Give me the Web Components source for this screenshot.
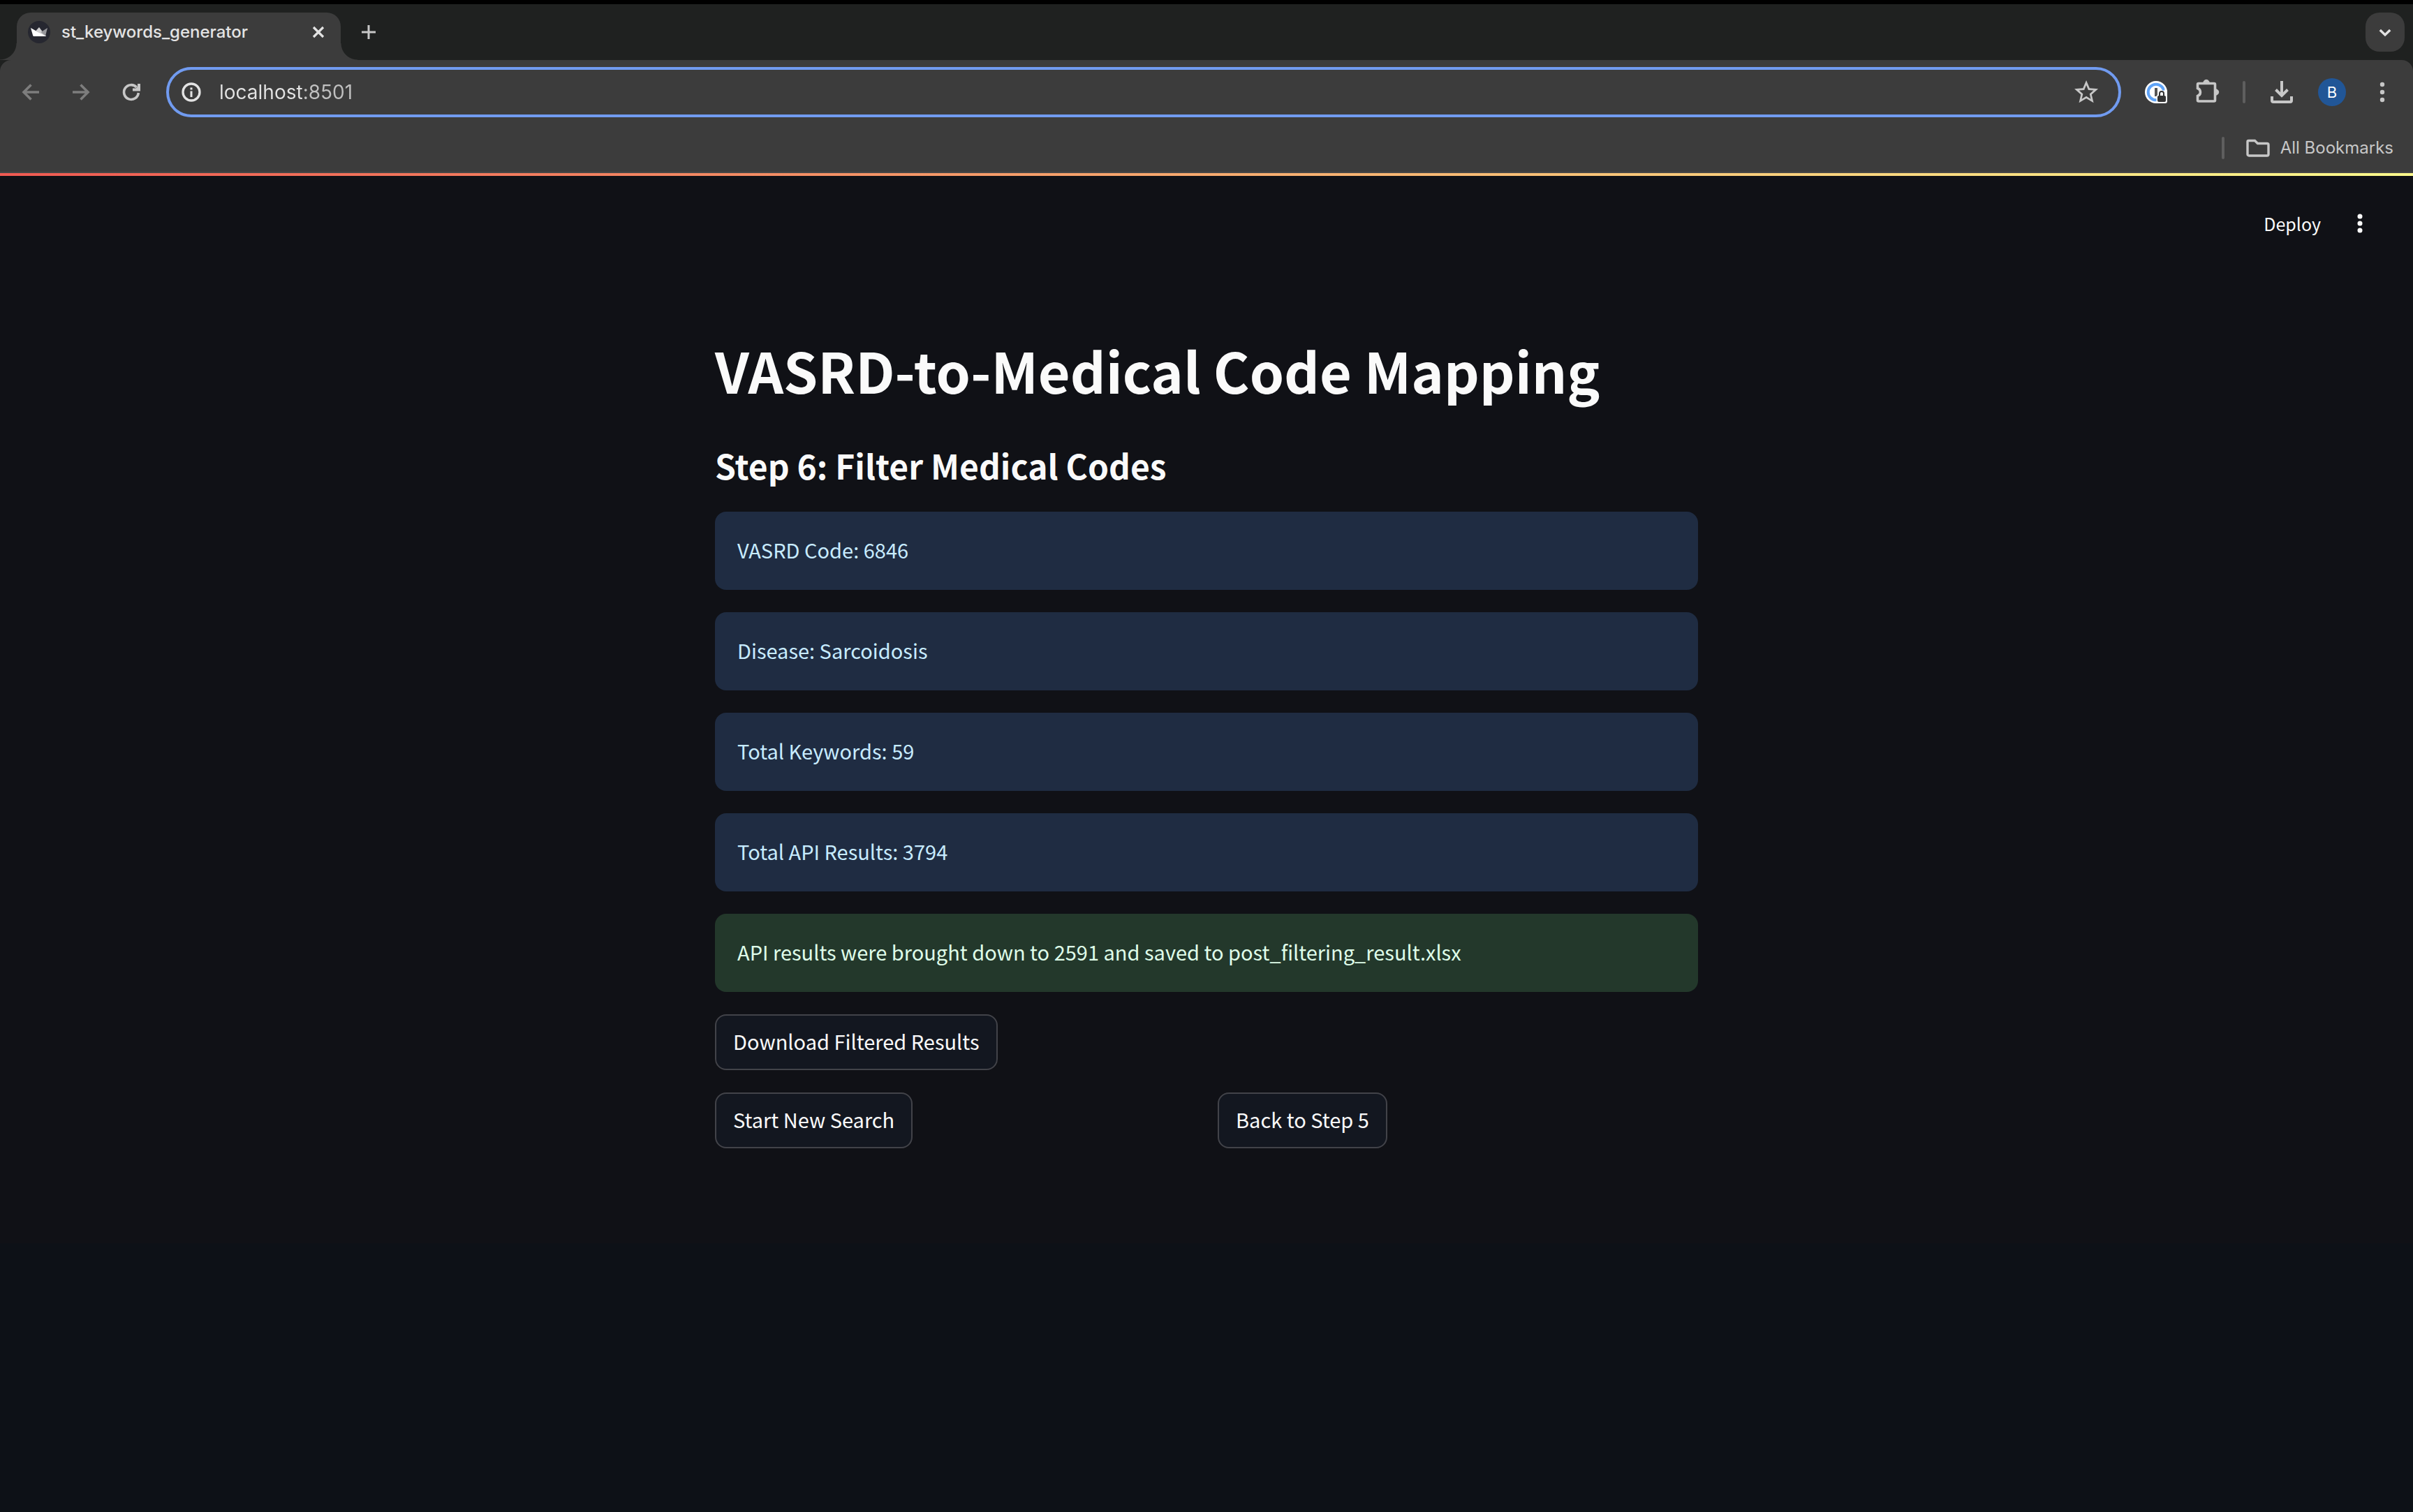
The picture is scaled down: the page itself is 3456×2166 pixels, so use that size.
<!DOCTYPE html>
<html lang="en">
<head>
<meta charset="utf-8">
<title>st_keywords_generator</title>
<style>
  html, body { margin: 0; min-height: 100%; background: #0d1117; }
  body { font-family: Inter, "Liberation Sans", sans-serif; }
</style>
</head>
<body>
<browser-frame>
  <tab-strip slot="tabs"></tab-strip>
  <tool-bar slot="toolbar" address="localhost:8501"></tool-bar>
  <bookmarks-bar slot="bookmarks">All Bookmarks</bookmarks-bar>
  <app-view>
    <app-header slot="header">Deploy</app-header>
    <page-heading level="1">VASRD-to-Medical Code Mapping</page-heading>
    <page-heading level="2">Step 6: Filter Medical Codes</page-heading>
    <app-stack>
      <status-alert kind="info">VASRD Code: 6846</status-alert>
      <status-alert kind="info">Disease: Sarcoidosis</status-alert>
      <status-alert kind="info">Total Keywords: 59</status-alert>
      <status-alert kind="info">Total API Results: 3794</status-alert>
      <status-alert kind="success">API results were brought down to 2591 and saved to post_filtering_result.xlsx</status-alert>
      <action-button>Download Filtered Results</action-button>
      <button-columns>
        <action-button>Start New Search</action-button>
        <action-button>Back to Step 5</action-button>
      </button-columns>
    </app-stack>
  </app-view>
</browser-frame>

<script>
const ICONS = {
  back: '<path d="M32 20H11M20.500 9.500 10 20l10.500 10.500" fill="none" stroke="currentColor" stroke-width="3.600"/>',
  forward: '<path d="M8 20h21M19.500 9.500 30 20 19.500 30.500" fill="none" stroke="currentColor" stroke-width="3.600"/>',
  reload: '<path d="M30.300 21A10.400 10.400 0 1 1 27.600 13" fill="none" stroke="currentColor" stroke-width="3.600"/><path d="M29 8h4v10.500H22v-4h4.500L29 12z" fill="currentColor"/>',
  info: '<circle cx="20" cy="20" r="12" fill="none" stroke="currentColor" stroke-width="3.300"/><path d="M18.500 18.500h3V27h-3zM18.500 13.500h3v3h-3z" fill="currentColor"/>',
  star: '<g transform="scale(1.700) translate(-.2 -.2)"><path fill="currentColor" d="M22 9.240l-7.190-.62L12 2 9.190 8.630 2 9.240l5.460 4.730L5.820 21 12 17.270 18.180 21l-1.630-7.030L22 9.240zM12 15.400l-3.760 2.270 1-4.280-3.320-2.880 4.380-.38L12 6.100l1.710 4.040 4.380.38-3.320 2.880 1 4.280L12 15.400z"/></g>',
  password: '<circle cx="20" cy="20" r="16" fill="#fff"/><circle cx="20" cy="20" r="11.300" fill="none" stroke="#5fa3f7" stroke-width="4"/><rect x="18" y="14" width="4" height="12" fill="#555"/><path d="M20.500 26l4-6 3.500-2.500h8V33a3 3 0 0 1-3 3H20.500z" fill="#fff"/><path d="M33 12.500a15 15 0 0 1 3 7.500h-4z" fill="#fff"/><rect x="22" y="25" width="12" height="9" rx="2" fill="#333"/><path d="M25 26v-4a3 3 0 0 1 6 0v4" fill="none" stroke="#333" stroke-width="2"/>',
  puzzle: '<path d="M9 7.500h22a1.500 1.500 0 0 1 1.500 1.500v22.500a1.500 1.500 0 0 1-1.500 1.500H9a1.500 1.500 0 0 1-1.500-1.500V25.500a5.800 5.800 0 0 0 0-11V9A1.500 1.500 0 0 1 9 7.500z" fill="none" stroke="currentColor" stroke-width="3.600"/><path d="M15.800 6.500a4.200 4.200 0 0 1 8.400 0z" fill="currentColor" stroke="currentColor"/><path d="M33.500 15.800a4.200 4.200 0 0 1 0 8.400z" fill="currentColor" stroke="currentColor"/>',
  download: '<path d="M20 4v21M11.500 16.500 20 25l8.500-8.500M6 26v6a2 2 0 0 0 2 2h24a2 2 0 0 0 2-2v-6" fill="none" stroke="currentColor" stroke-width="4"/>',
  dots: '<g fill="currentColor"><circle cx="20" cy="9" r="3.200"/><circle cx="20" cy="20" r="3.200"/><circle cx="20" cy="31" r="3.200"/></g>',
  menu: '<g fill="currentColor"><circle cx="20" cy="10" r="3.500"/><circle cx="20" cy="20" r="3.500"/><circle cx="20" cy="30" r="3.500"/></g>',
  close: '<path d="M13 13l14 14M27 13 13 27" fill="none" stroke="currentColor" stroke-width="3.200"/>',
  plus: '<path d="M20 10v20M10 20h20" fill="none" stroke="currentColor" stroke-width="3"/>',
  chevron: '<path d="M12.800 17 20 24l7.200-7" fill="none" stroke="currentColor" stroke-width="3.400"/>',
  folder: '<path d="M6.500 9.500h9l4 4H33a2 2 0 0 1 2 2V29a2 2 0 0 1-2 2H7a2 2 0 0 1-2-2V11a1.500 1.500 0 0 1 1.500-1.500z" fill="none" stroke="currentColor" stroke-width="3.400"/>',
  crown: '<circle cx="20" cy="20" r="16" fill="#262730"/><path d="M8 14l8 4.500L30 25q-.3 1-1 1H12.500q-1 0-1.300-1z" fill="#fff"/><path d="M15 18.500 20 13l5 6.500L29.500 25.500z" fill="#d0d0d2"/><path d="M32 14l-3 11.500L22.500 20z" fill="#97979b"/>'
};
const icon = name => `<svg viewBox="0 0 40 40" width="40" height="40" aria-hidden="true">${ICONS[name]}</svg>`;

function define(name, render) {
  customElements.define(name, class extends HTMLElement {
    constructor() {
      super();
      this.attachShadow({ mode: 'open' });
    }
    connectedCallback() {
      const template = document.createElement('template');
      template.innerHTML = render(this);
      this.shadowRoot.replaceChildren(template.content.cloneNode(true));
    }
  });
}

const BUTTON_RESET = `
  * { box-sizing: border-box; }
  button { margin: 0; padding: 0; border: 0; background: none; color: inherit; font: inherit; cursor: pointer; }
  svg { display: block; flex: none; }
`;

define('icon-button', el => `
  <style>${BUTTON_RESET}
    :host { display: block; flex: none; width: 72px; color: #c7c7c7; }
    button { display: flex; width: 100%; height: 72px; align-items: center; justify-content: center; }
  </style>
  <button type="button" aria-label="${el.getAttribute('label')}">${icon(el.getAttribute('icon'))}</button>
`);

define('browser-frame', () => `
  <style>
    :host { display: flex; flex-direction: column; min-height: 100vh; box-sizing: border-box; border-top: 6px solid #000; }
    .chrome { background: #3c3c3c; border-bottom: 2px solid #474747; }
  </style>
  <div class="chrome">
    <slot name="tabs"></slot>
    <slot name="toolbar"></slot>
    <slot name="bookmarks"></slot>
  </div>
  <slot></slot>
`);

define('tab-strip', () => `
  <style>${BUTTON_RESET}
    :host { display: flex; align-items: flex-start; height: 80px; box-sizing: border-box; padding: 12px 12px 0 24px; background: #1f2120; }
    .tab { display: flex; align-items: center; width: 464px; height: 68px; padding: 0 12px 12px; position: relative; border-radius: 20px 20px 0 0; background: #3c3c3c; color: #e3e3e3; }
    .tab::before, .tab::after { content: ""; position: absolute; bottom: 0; width: 24px; height: 24px; }
    .tab::before { right: 100%; background: radial-gradient(circle at 0 0, transparent 23px, #3c3c3c 24px); }
    .tab::after { left: 100%; background: radial-gradient(circle at 100% 0, transparent 23px, #3c3c3c 24px); }
    .title { flex: 1; padding-left: 12px; font-size: 24px; font-weight: 500; line-height: 32px; white-space: nowrap; }
    .new { margin-left: 20px; height: 56px; color: #c7c7c7; }
    .search { display: flex; align-items: center; justify-content: center; width: 56px; height: 56px; margin-left: auto; border-radius: 20px; background: #3c3c3c; color: #e3e3e3; }
  </style>
  <div class="tab">${icon('crown')}<span class="title">st_keywords_generator</span><button type="button" aria-label="Close tab">${icon('close')}</button></div>
  <button class="new" type="button" aria-label="New tab">${icon('plus')}</button>
  <button class="search" type="button" aria-label="Search tabs">${icon('chevron')}</button>
`);

define('tool-bar', el => `
  <style>${BUTTON_RESET}
    :host { display: block; background: #1f2120; }
    .row { display: flex; align-items: center; padding: 10px 8px; border-radius: 16px 16px 0 0; background: #3c3c3c; }
    .history { color: #7d7d7d; }
    form { display: flex; flex: 1; align-items: center; height: 72px; margin: 0 14px; padding: 0 26px 0 12px; border: 4px solid #719bf0; border-radius: 36px; color: #e3e3e3; }
    input { flex: 1; min-width: 0; height: 40px; margin: 0 20px; padding: 0; border: 0; outline: 0; font: 28px/40px Inter, sans-serif; color: #e3e3e3;
      background: linear-gradient(90deg, #e3e3e3 121px, #c0c0c0 121px); -webkit-background-clip: text; background-clip: text; -webkit-text-fill-color: transparent; }
    .star { color: #c7c7c7; }
    .rule { flex: none; width: 4px; height: 32px; margin: 0 16px; border-radius: 2px; background: #5e5e5e; }
    .profile { display: flex; flex: none; width: 40px; height: 40px; margin: 0 16px; align-items: center; justify-content: center; border-radius: 50%; background: #215697; color: #fff; font-size: 22px; }
  </style>
  <div class="row">
    <icon-button class="history" icon="back" label="Back"></icon-button>
    <icon-button class="history" icon="forward" label="Forward"></icon-button>
    <icon-button icon="reload" label="Reload"></icon-button>
    <form>
      ${icon('info')}
      <input type="text" aria-label="Address" value="${el.getAttribute('address')}">
      <button class="star" type="button" aria-label="Bookmark this page">${icon('star')}</button>
    </form>
    <icon-button icon="password" label="Password manager"></icon-button>
    <icon-button icon="puzzle" label="Extensions"></icon-button>
    <span class="rule"></span>
    <icon-button icon="download" label="Downloads"></icon-button>
    <button class="profile" type="button">B</button>
    <icon-button icon="dots" label="Menu"></icon-button>
  </div>
`);

define('bookmarks-bar', () => `
  <style>${BUTTON_RESET}
    :host { display: flex; align-items: center; justify-content: flex-end; height: 68px; padding-right: 28px; color: #c7c7c7; }
    .rule { width: 4px; height: 32px; margin-right: 28px; border-radius: 2px; background: #5e5e5e; }
    button { display: flex; align-items: center; gap: 12px; font-size: 24px; line-height: 32px; }
  </style>
  <span class="rule"></span>
  <button type="button">${icon('folder')}<span><slot></slot></span></button>
`);

define('app-view', () => `
  <style>
    :host { display: block; font-family: "Noto Sans CJK JP", "Noto Sans", sans-serif; color: #fafafa; background: #101116; }
    .decoration { height: 4px; background: linear-gradient(90deg, #f05a52, #fffb8c); }
    main { max-width: 1408px; margin: 0 auto; padding: 94px 32px 136px; }
  </style>
  <div class="decoration"></div>
  <slot name="header"></slot>
  <main><slot></slot></main>
`);

define('app-header', () => `
  <style>${BUTTON_RESET}
    :host { display: flex; align-items: center; justify-content: flex-end; gap: 36px; height: 136px; padding-right: 56px; font-size: 25px; line-height: 40px; }
  </style>
  <button type="button"><slot></slot></button>
  <button type="button" aria-label="Main menu">${icon('menu')}</button>
`);

define('page-heading', el => {
  const level = el.getAttribute('level');
  return `
  <style>
    :host { display: block; }
    h1, h2 { margin: 0; font-weight: 700; }
    h1 { font-size: 79px; line-height: 96px; padding-bottom: 58px; }
    h2 { font-size: 48px; line-height: 60px; padding-bottom: 37px; }
  </style>
  <h${level}><slot></slot></h${level}>`;
});

define('app-stack', () => `
  <style>:host { display: flex; flex-direction: column; align-items: stretch; gap: 32px; }</style>
  <slot></slot>
`);

define('status-alert', el => `
  <style>
    :host { display: block; padding: 30px 32px 34px; border-radius: 16px; font-size: 29px; line-height: 48px; color: #c7ebff; background: #1f2c42; }
    :host([kind="success"]) { color: #dffde9; background: #23382b; }
  </style>
  <div role="alert"><slot></slot></div>
`);

define('action-button', () => `
  <style>${BUTTON_RESET}
    :host { display: block; }
    button { height: 80px; padding: 0 24px 4px; border: 2px solid #424349; border-radius: 16px; background: #131720; font-size: 29px; line-height: 48px; white-space: nowrap; }
  </style>
  <button type="button"><slot></slot></button>
`);

define('button-columns', () => `
  <style>:host { display: grid; grid-template-columns: 1fr 1fr; gap: 32px; }</style>
  <slot></slot>
`);
</script>
</body>
</html>
